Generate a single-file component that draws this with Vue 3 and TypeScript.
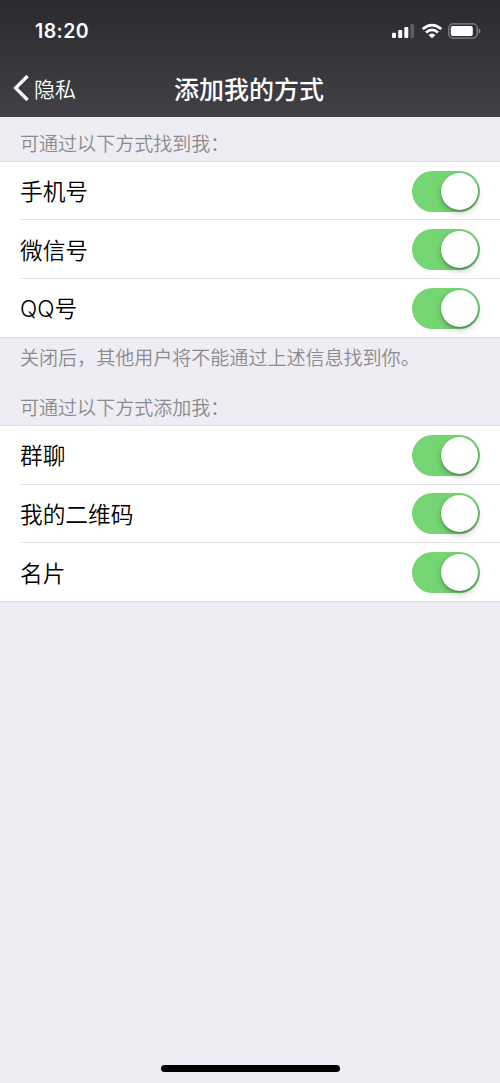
<script setup lang="ts">
import { reactive } from 'vue'

interface Option {
  label: string
  on: boolean
}

interface Section {
  title: string
  options: Option[]
  note?: string
}

const sections = reactive<Section[]>([
  {
    title: '可通过以下方式找到我：',
    options: [
      { label: '手机号', on: true },
      { label: '微信号', on: true },
      { label: 'QQ号', on: true },
    ],
    note: '关闭后，其他用户将不能通过上述信息找到你。',
  },
  {
    title: '可通过以下方式添加我：',
    options: [
      { label: '群聊', on: true },
      { label: '我的二维码', on: true },
      { label: '名片', on: true },
    ],
  },
])
</script>

<template>
  <div class="screen">
    <header class="header">
      <div class="status">
        <span class="time">18:20</span>
        <div class="indicators">
          <svg class="signal" width="24" height="16" viewBox="0 0 24 16" fill="#fff">
            <rect x="1" y="9.7" width="4" height="5.3" rx="1" />
            <rect x="7.2" y="7" width="4" height="8" rx="1" />
            <rect x="13.3" y="4" width="4" height="11" rx="1" />
            <rect x="19.4" y="1" width="3.8" height="14" rx="1" fill="#5d5d63" />
          </svg>
          <svg class="wifi" width="22" height="16" viewBox="0 0 22 16">
            <g fill="none" stroke="#fff" stroke-width="2.7">
              <path d="M1.7 6.1 Q11 -1.9 20.3 6.1" />
              <path d="M5 9.6 Q11 4.2 17 9.6" />
            </g>
            <path d="M7.5 12 Q11 8.9 14.5 12 L11 15.3 Z" fill="#fff" />
          </svg>
          <svg class="battery" width="34" height="16" viewBox="0 0 34 16">
            <rect x="0.8" y="0.9" width="28.4" height="14.2" rx="4" fill="none" stroke="#85858a" stroke-width="1.2" />
            <rect x="2.8" y="2.9" width="22" height="10.2" rx="2" fill="#fff" />
            <path d="M30.6 5.3 Q32.5 6.3 32.5 8 Q32.5 9.7 30.6 10.7 Z" fill="#85858a" />
          </svg>
        </div>
      </div>
      <nav class="nav">
        <button class="back" type="button">
          <svg width="16" height="28" viewBox="0 0 16 28" fill="none" stroke="#fff" stroke-width="3.3">
            <path d="M14.6 2 L2.6 14 L14.6 26" />
          </svg>
          <span>隐私</span>
        </button>
        <h1 class="title">添加我的方式</h1>
      </nav>
    </header>

    <main class="content">
      <section v-for="section in sections" :key="section.title" class="section">
        <h2 class="caption">{{ section.title }}</h2>
        <ul class="list">
          <li v-for="option in section.options" :key="option.label" class="row">
            <span class="label">{{ option.label }}</span>
            <button
              class="switch"
              :class="{ on: option.on }"
              type="button"
              role="switch"
              :aria-checked="option.on"
              :aria-label="option.label"
              @click="option.on = !option.on"
            >
              <span class="knob"></span>
            </button>
          </li>
        </ul>
        <p v-if="section.note" class="note">{{ section.note }}</p>
      </section>
    </main>

    <footer class="home"><span class="bar"></span></footer>
  </div>
</template>

<style>
body {
  margin: 0;
  background: #eeedf3;
}
</style>

<style scoped>
.screen {
  display: flex;
  flex-direction: column;
  width: 500px;
  height: 1083px;
  overflow: hidden;
  background: #eeedf3;
  font-family: Inter, "Noto Sans CJK SC", sans-serif;
  color: #000;
}
.header {
  height: 117px;
  background: linear-gradient(#2b2a2f, #414045);
  color: #fff;
}
.status {
  display: flex;
  align-items: center;
  justify-content: space-between;
  height: 61px;
  padding: 0 18px 0 35px;
}
.time {
  font-size: 19.5px;
  font-weight: 600;
  letter-spacing: 0.4px;
}
.indicators {
  display: flex;
  align-items: center;
}
.wifi {
  margin-left: 6px;
}
.battery {
  margin-left: 5px;
}
.nav {
  display: grid;
  grid-template-columns: 1fr auto 1fr;
  align-items: center;
  height: 54px;
}
.back {
  display: flex;
  align-items: center;
  gap: 5px;
  padding: 0 0 0 13px;
  border: 0;
  background: none;
  color: #fff;
  font: 350 21px/30px "Noto Sans CJK SC", sans-serif;
}
.title {
  margin: 0 2px 0 0;
  font: 500 25px/34px "Noto Sans CJK SC", sans-serif;
}
.caption,
.note {
  margin: 0;
  padding: 0 20px;
  color: #8b8a90;
  font: 350 19.05px/28px "Noto Sans CJK SC", sans-serif;
}
.caption {
  padding-top: 12px;
  padding-bottom: 4px;
}
.note {
  padding-top: 5px;
  padding-bottom: 10px;
}
.list {
  margin: 0;
  padding: 0;
  list-style: none;
  background: #fff;
  border-top: 1px solid #dedde2;
  border-bottom: 1px solid #dedde2;
}
.row {
  display: flex;
  align-items: center;
  justify-content: space-between;
  box-sizing: border-box;
  height: 58.4px;
  margin-left: 20px;
  padding: 1px 20px 0 0;
}
.row:not(:last-child) {
  border-bottom: 1px solid #e4e4e7;
}
.label {
  padding-top: 2px;
  font: 350 22.7px/32px Inter, "Noto Sans CJK SC", sans-serif;
}
.switch {
  display: flex;
  align-items: center;
  box-sizing: border-box;
  width: 68px;
  height: 41px;
  padding: 2px;
  border: 0;
  border-radius: 21px;
  background: #e5e5ea;
}
.switch.on {
  justify-content: flex-end;
  background: #74d572;
}
.knob {
  width: 37px;
  height: 37px;
  border-radius: 50%;
  background: #fff;
  box-shadow: 0 3px 6px rgba(0, 0, 0, 0.22), 0 1px 2px rgba(0, 0, 0, 0.3);
}
.home {
  display: flex;
  justify-content: center;
  margin-top: auto;
  padding-bottom: 11px;
}
.bar {
  width: 179px;
  height: 7px;
  margin-left: 1px;
  border-radius: 4px;
  background: #000;
}
</style>
